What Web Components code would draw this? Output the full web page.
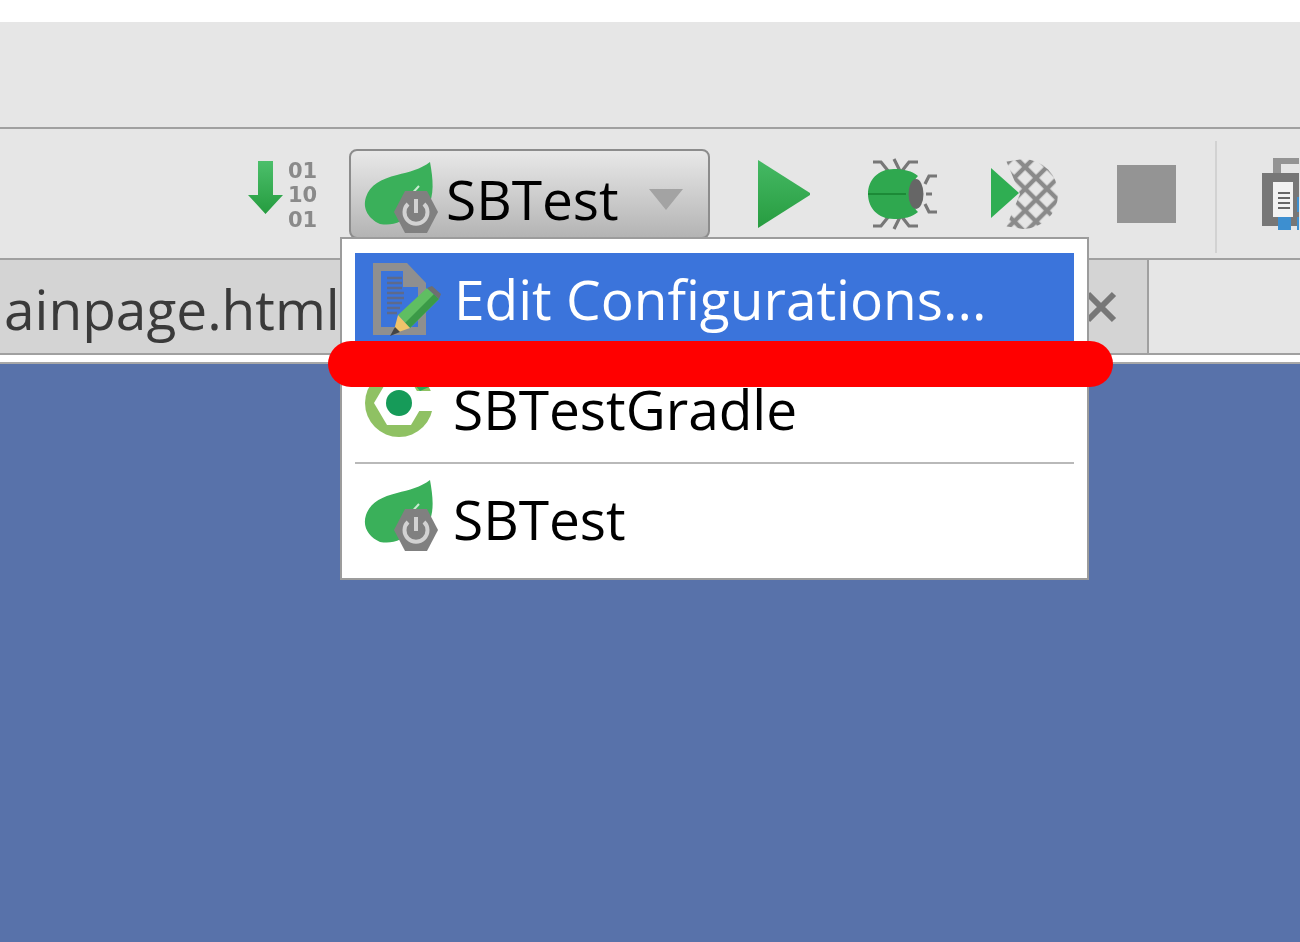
<!DOCTYPE html>
<html>
<head>
<meta charset="utf-8">
<title>SBTest</title>
<style>
  html, body { margin: 0; height: 100%; overflow: hidden; background: #fff; }
  body { font-family: "Open Sans", "Noto Sans", sans-serif; }
  ide-window { display: flex; height: 942px; }
</style>
</head>
<body>
<ide-window>
  <ide-toolbar>
    <build-icon style="margin-left:248px"></build-icon>
    <run-combo style="margin-left:29px">SBTest</run-combo>
    <ide-icon name="run" style="margin-left:46px;width:56px;height:70px"></ide-icon>
    <ide-icon name="debug" style="margin-left:56px;width:72px;height:72px"></ide-icon>
    <ide-icon name="coverage" style="margin-left:50px;width:70px;height:72px"></ide-icon>
    <ide-icon name="stop" style="margin-left:57px;width:60px;height:60px"></ide-icon>
    <tool-sep></tool-sep>
    <ide-icon name="print" style="margin-left:45px;width:37px;height:74px"></ide-icon>
  </ide-toolbar>
  <ide-tabs>
    <editor-tab>ainpage.html</editor-tab>
  </ide-tabs>
  <config-popup>
    <config-item selected icon="edit">Edit Configurations...</config-item>
    <config-item icon="gradle">SBTestGradle</config-item>
    <popup-sep></popup-sep>
    <config-item icon="spring">SBTest</config-item>
  </config-popup>
  <red-mark></red-mark>
</ide-window>

<script>
(function (window) {
  'use strict';

  const SPRING = `
    <svg viewBox="0 0 78 76" width="78" height="76">
      <path fill="#3ab05a" d="M69 3C72 20 74 36 66 50L40 62C32 66 26 66 19 65 8 60 1 50 5 38 9 26 20 20 36 16 48 13 60 10 69 3Z"/>
      <path fill="none" stroke="#c9ebd0" stroke-width="2" d="M58 27L46 40"/>
      <path fill="#808080" d="M33 53L44 32H66L77 53 66 74H44Z"/>
      <path fill="none" stroke="#d2d2d2" stroke-width="4" d="M47 45A11.5 11.5 0 1 0 63 45"/>
      <path fill="none" stroke="#d2d2d2" stroke-width="4" d="M55 40V54"/>
    </svg>`;

  const ICONS = {
    run: `
      <svg viewBox="0 0 56 70" width="56" height="70">
        <defs><linearGradient id="pl" x1="0" y1="0" x2="0" y2="1"><stop offset="0" stop-color="#45b964"/><stop offset="1" stop-color="#279c40"/></linearGradient></defs>
        <path fill="url(#pl)" d="M2 1L54 34V36L2 69Z"/>
      </svg>`,
    debug: `
      <svg viewBox="0 0 72 72" width="72" height="72">
        <g fill="none" stroke="#777" stroke-width="3.2">
          <path d="M5 4H13L21 14M26 1L32 13M50 4H41L34 13M5 68H13L21 58M26 71L32 59M50 68H41L34 59"/>
          <path d="M69 18H61L57 26M58 36H64M69 54H61L57 46"/>
        </g>
        <path fill="#2fa84f" d="M26 11C36 11 44 13 50 18 41 27 41 45 50 54 44 59 36 61 26 61 10 61 0 50 0 36 0 22 10 11 26 11Z"/>
        <path fill="none" stroke="#1c8a37" stroke-width="2" d="M0 36H38"/>
        <ellipse cx="48" cy="36" rx="7.5" ry="15" fill="#666"/>
      </svg>`,
    coverage: `
      <svg viewBox="0 0 70 72" width="70" height="72">
        <defs>
          <pattern id="net" width="15.4" height="15.4" patternUnits="userSpaceOnUse" patternTransform="rotate(45 33 36)">
            <rect width="15.4" height="15.4" fill="none" stroke="#8a8a8a" stroke-width="4.4"/>
          </pattern>
          <clipPath id="cv"><path d="M14 36L14 4 33 1A35 35 0 0 1 33 71L14 68Z"/></clipPath>
        </defs>
        <g clip-path="url(#cv)"><rect width="70" height="72" fill="url(#net)"/></g>
        <path fill="#e6e6e6" d="M0 0H15L30 36 15 72H0Z"/>
        <path fill="#2fae52" d="M1 10L29 35 1 60Z"/>
      </svg>`,
    stop: `<svg viewBox="0 0 60 60" width="60" height="60"><rect y="1" width="59" height="58" fill="#949494"/></svg>`,
    print: `
      <svg viewBox="0 0 37 74" width="37" height="74">
        <path fill="#949494" d="M11 1H37V16H11Z"/>
        <path fill="#e6e6e6" d="M19 7H37V16H19Z"/>
        <path fill="#777" d="M0 16H37V69H0Z"/>
        <path fill="#f2f2f2" d="M11 25H31V60H11Z"/>
        <path stroke="#666" stroke-width="2" d="M16 36H28M16 41H28M16 46H28M16 51H28"/>
        <path fill="#3d8fd0" d="M16 60H29V73H16ZM35 40H37V55H35ZM35 60H37V73H35Z"/>
      </svg>`,
    spring: SPRING,
    gradle: `
      <svg viewBox="0 0 76 76" width="76" height="76">
        <circle cx="38" cy="37" r="34" fill="#8fc163"/>
        <path fill="#fff" d="M13 37L26 15H50L63 37 50 59H26Z"/>
        <path fill="#fff" d="M52 25H74V45H52Z"/>
        <path fill="#2ba85a" d="M52 6A34 34 0 0 1 68 21L59 25 48 12Z"/>
        <circle cx="38" cy="37" r="13" fill="#169b59"/>
      </svg>`,
    edit: `
      <svg viewBox="0 0 72 76" width="72" height="76">
        <path fill="#8f8f8f" d="M4 2H38L57 22V74H4ZM12 10V66H49V26H34V10Z"/>
        <path stroke="#5d6a8c" stroke-width="2.4" d="M18 17H33M18 22H33M18 27H33M18 32H35M18 37H35M18 42H33M18 47H31M18 52H28"/>
        <path fill="#5fbe62" d="M29 54L58 27 70 38 41 67Z"/>
        <path fill="#3b9a47" d="M36 62L65 33 70 38 41 67Z"/>
        <path fill="#6f6f6f" d="M58 27L63 25 72 33 70 38Z"/>
        <path fill="#f0c36a" d="M29 54L41 67 24 73Z"/>
        <path fill="#444" d="M26 66L31 71 21 75Z"/>
      </svg>`
  };

  class IdeIcon extends HTMLElement {
    constructor() {
      super();
      this.attachShadow({ mode: 'open' });
      this.shadowRoot.innerHTML = `
        <style>
          :host { display: block; flex: none; }
          svg { display: block; }
        </style>
        ${ICONS[this.getAttribute('name')]}
      `;
    }
  }
  window.customElements.define('ide-icon', IdeIcon);

  // "make project" button: arrow next to a small column of digits
  class BuildIcon extends HTMLElement {
    constructor() {
      super();
      this.attachShadow({ mode: 'open' });
      this.shadowRoot.innerHTML = `
        <style>
          :host { display: flex; flex: none; width: 72px; height: 70px; align-items: flex-start; }
          svg { display: block; flex: none; margin-top: 2px; }
          .bits { margin: 0 0 0 5px; font: 700 21px/24.5px "DejaVu Sans", sans-serif; color: #8a8a8a; }
          .bits div { height: 24.5px; }
        </style>
        <svg viewBox="0 0 35 53" width="35" height="53">
          <defs><linearGradient id="ar" x1="0" y1="0" x2="0" y2="1"><stop offset="0" stop-color="#4cbf6b"/><stop offset="1" stop-color="#259c3f"/></linearGradient></defs>
          <path fill="url(#ar)" d="M10 0H25V34H35L17.5 53 0 34H10Z"/>
        </svg>
        <div class="bits"><div>01</div><div>10</div><div>01</div></div>
      `;
    }
  }
  window.customElements.define('build-icon', BuildIcon);

  class IdeWindow extends HTMLElement {
    constructor() {
      super();
      this.attachShadow({ mode: 'open' });
      this.shadowRoot.innerHTML = `
        <style>
          :host { display: flex; flex-direction: column; position: relative; overflow: hidden; padding-top: 22px; box-sizing: border-box; background: #fff; filter: blur(0.5px); }
          .menu { height: 105px; flex: none; background: #e6e6e6; border-bottom: 2px solid #a0a0a0; }
          .gap { height: 7px; flex: none; background: #fff; border-bottom: 2px solid #a8a8a8; }
          .main { flex: 1; background: #5872aa; }
        </style>
        <div class="menu"></div>
        <slot></slot>
        <div class="gap"></div>
        <div class="main"></div>
      `;
    }
  }
  window.customElements.define('ide-window', IdeWindow);

  class IdeToolbar extends HTMLElement {
    constructor() {
      super();
      this.attachShadow({ mode: 'open' });
      this.shadowRoot.innerHTML = `
        <style>
          :host { display: flex; align-items: center; flex: none; height: 129px; box-sizing: border-box; background: #e6e6e6; overflow: hidden; }
        </style>
        <slot></slot>
      `;
    }
  }
  window.customElements.define('ide-toolbar', IdeToolbar);

  class ToolSep extends HTMLElement {
    constructor() {
      super();
      this.attachShadow({ mode: 'open' });
      this.shadowRoot.innerHTML = `
        <style>
          :host { display: block; flex: none; width: 2px; height: 112px; margin: 6px 0 0 38px; background: #d2d2d2; }
        </style>
      `;
    }
  }
  window.customElements.define('tool-sep', ToolSep);

  class RunCombo extends HTMLElement {
    constructor() {
      super();
      this.attachShadow({ mode: 'open' });
      this.shadowRoot.innerHTML = `
        <style>
          :host { display: flex; align-items: center; flex: none; box-sizing: border-box; width: 361px; height: 90px; padding: 0 0 0 10px; border: 2px solid #8c8c8c; border-radius: 8px; background: linear-gradient(#e8e8e8, #b4b4b4); color: #000; font-size: 55px; }
          .icon { display: block; width: 72px; margin-top: 6px; margin-right: 13px; flex: none; }
          svg { display: block; }
          .t { margin-top: 10px; }
          .arrow { width: 0; height: 0; margin-left: 30px; margin-top: 11px; border: 17.5px solid transparent; border-top: 21px solid #a3a3a3; border-bottom: 0; }
        </style>
        <span class="icon">${SPRING}</span>
        <span class="t"><slot></slot></span>
        <span class="arrow"></span>
      `;
    }
  }
  window.customElements.define('run-combo', RunCombo);

  class IdeTabs extends HTMLElement {
    constructor() {
      super();
      this.attachShadow({ mode: 'open' });
      this.shadowRoot.innerHTML = `
        <style>
          :host { display: flex; flex: none; height: 97px; box-sizing: border-box; border-top: 2px solid #a0a0a0; border-bottom: 2px solid #a0a0a0; background: #e6e6e6; }
        </style>
        <slot></slot>
      `;
    }
  }
  window.customElements.define('ide-tabs', IdeTabs);

  class EditorTab extends HTMLElement {
    constructor() {
      super();
      this.attachShadow({ mode: 'open' });
      this.shadowRoot.innerHTML = `
        <style>
          :host { display: flex; align-items: center; justify-content: space-between; box-sizing: border-box; width: 1149px; padding: 4px 30px 0 4px; border-right: 2px solid #a0a0a0; background: #d4d4d4; color: #3a3a3a; font-size: 55px; }
          svg { display: block; margin-top: -4px; }
        </style>
        <span><slot></slot></span>
        <svg viewBox="0 0 32 32" width="32" height="32"><path stroke="#777" stroke-width="6" d="M3 3L29 29M29 3L3 29"/></svg>
      `;
    }
  }
  window.customElements.define('editor-tab', EditorTab);

  class ConfigPopup extends HTMLElement {
    constructor() {
      super();
      this.attachShadow({ mode: 'open' });
      this.shadowRoot.innerHTML = `
        <style>
          :host { position: absolute; left: 340px; top: 237px; width: 749px; height: 343px; box-sizing: border-box; padding: 14px 13px 0; display: flex; flex-direction: column; background: #fff; border: 2px solid #9c9c9c; }
        </style>
        <slot></slot>
      `;
    }
  }
  window.customElements.define('config-popup', ConfigPopup);

  class ConfigItem extends HTMLElement {
    constructor() {
      super();
      this.attachShadow({ mode: 'open' });
      const icon = this.getAttribute('icon');
      this.shadowRoot.innerHTML = `
        <style>
          :host { display: flex; align-items: center; height: 105px; padding-left: 6px; flex: none; color: #000; font-size: 55px; }
          :host([selected]) { background: #3b74db; color: #fff; height: 104px; align-items: flex-start; }
          .icon { display: block; width: 92px; flex: none; }
          svg { display: block; }
          .t { display: block; line-height: 91px; }
          :host([selected]) .icon { padding-top: 8px; padding-left: 8px; width: 85px; }
          :host([icon=gradle]) .icon { margin-top: -11px; }
          :host([icon=gradle]) .t { margin-top: -2px; }
          :host([icon=spring]) .icon { margin-top: -3px; }
          :host([icon=spring]) .t { margin-top: 4px; }
        </style>
        <span class="icon">${ICONS[icon]}</span>
        <span class="t"><slot></slot></span>
      `;
    }
  }
  window.customElements.define('config-item', ConfigItem);

  class PopupSep extends HTMLElement {
    constructor() {
      super();
      this.attachShadow({ mode: 'open' });
      this.shadowRoot.innerHTML = `
        <style>
          :host { display: block; flex: none; height: 2px; background: #b9b9b9; }
        </style>
      `;
    }
  }
  window.customElements.define('popup-sep', PopupSep);

  // the red stroke somebody painted over the screenshot
  class RedMark extends HTMLElement {
    constructor() {
      super();
      this.attachShadow({ mode: 'open' });
      this.shadowRoot.innerHTML = `
        <style>
          :host { position: absolute; left: 328px; top: 341px; width: 785px; height: 46px; border-radius: 23px; background: #f00; }
        </style>
      `;
    }
  }
  window.customElements.define('red-mark', RedMark);

})(window);
</script>
</body>
</html>
